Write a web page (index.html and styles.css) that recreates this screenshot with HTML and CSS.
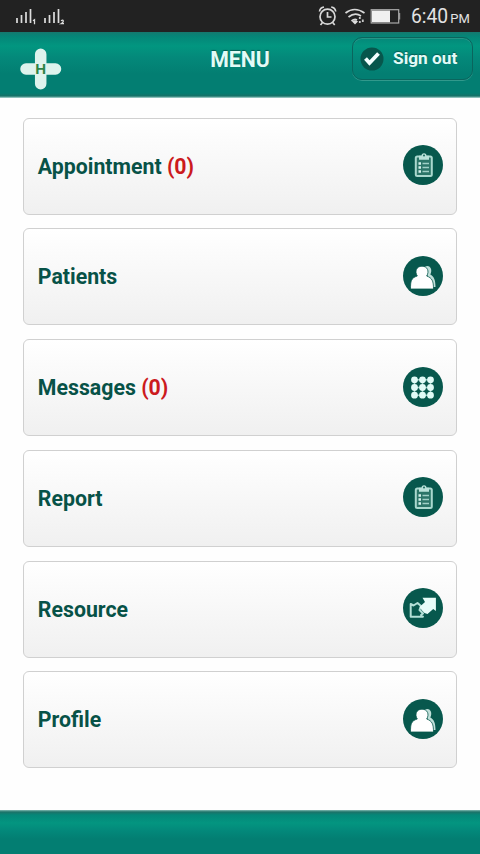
FILE: index.html
```html
<!DOCTYPE html>
<html lang="en">
<head>
<meta charset="utf-8">
<title>Menu</title>
<link rel="stylesheet" href="styles.css">
</head>
<body>
<svg class="defs" aria-hidden="true">
  <symbol id="clipboard" viewBox="0 0 40 40">
    <circle class="disc" cx="20" cy="20" r="20"/>
    <rect x="12.800" y="11.500" width="16" height="19.500" rx="1.500" fill="#2b7568" stroke="#a9d8ce" stroke-width="2"/>
    <path d="M16 14.800v-4h2.500a2.500 2.500 0 0 1 5 0H26v4z" fill="#b9e2d9"/>
    <circle cx="21" cy="10.500" r="1" fill="#17675b"/>
    <path d="M19.500 18.500H26M19.500 22.500H26M19.500 26.500H26" stroke="#9fd0c6" stroke-width="1.500"/>
    <path d="M15.500 18.500h2.500M15.500 22.500h2.500M15.500 26.500h2.500" stroke="#d4f1eb" stroke-width="2.400"/>
  </symbol>
  <symbol id="people" viewBox="0 0 40 40">
    <circle class="disc" cx="20" cy="20" r="20"/>
    <path d="M22 10.500c5-2.500 8 3 5.300 8 3.500 2 5.200 5 5.200 12.500h-5z" fill="#c0e0da"/>
    <path d="M7.500 33c0-8 .5-11 6.800-13-2.800-4.500-1-9.800 4.700-9.800s7.500 5.300 4.700 9.800c5.500 2 6.800 5 6.800 13z" fill="#fff" stroke="#07584d" stroke-width=".8"/>
  </symbol>
  <symbol id="grid" viewBox="0 0 40 40">
    <circle class="disc" cx="20" cy="20" r="20"/>
    <path d="M11.500 12.800h16M11.500 20.500h16M11.500 28.200h16M11.500 12.800v15.400M19.500 12.800v15.400M27.500 12.800v15.400" stroke="#8fc5bb" stroke-width="1.500"/>
    <path d="M11.500 12.800h0M19.500 12.800h0M27.500 12.800h0M11.500 20.500h0M19.500 20.500h0M27.500 20.500h0M11.500 28.200h0M19.500 28.200h0M27.500 28.200h0" stroke="#e0fbf6" stroke-width="6.800" stroke-linecap="round"/>
  </symbol>
  <symbol id="arrows" viewBox="0 0 40 40">
    <circle class="disc" cx="20" cy="20" r="20"/>
    <path d="M7.700 16l2.800 1.500 4-2.500 3.500 3-1.500 4 3.500 3.500-2 1.500 2 1.700H7.700z" fill="#07584d" stroke="#b3e0d7" stroke-width="2" stroke-linejoin="round"/>
    <path d="M19.500 9.800h13.400v13.200l-2.700-2-5.700 5-3-1-2.500-2.500-2.500-3.500 5.500-5z" fill="#e8fdf9"/>
  </symbol>
</svg>

<div class="status">
  <svg class="signals" width="54" height="20" viewBox="0 0 54 20">
    <path d="M2 15v-5M6.500 15V7M11 15V4M15.500 15V1M30 15v-5M34.500 15V7M39 15V4M43.500 15V1" stroke="#ddd" stroke-width="1.700"/>
    <path d="M18 12.800l1.500-1v4.500M46 12.800q2.300-1.500 2.300.5 0 1.200-2.100 2.400h2.800" fill="none" stroke="#ddd" stroke-width="1.300"/>
  </svg>
  <div class="indicators">
    <svg width="84" height="22" viewBox="0 0 84 22">
      <g fill="none" stroke="#d8d8d8" stroke-width="1.700">
        <circle cx="10.500" cy="11.700" r="7.500"/>
        <path d="M10.500 7v5h4M2.500 6.500q.5-4 4.500-4.500M18.700 6.500q-.5-4-4.500-4.500M5.500 17.500l-2 2.500M15.700 17.500l2 2.500"/>
        <path d="M28.500 8q9-7 19 0M31.500 12q6.500-5 12.500-1M34.500 16q3-2.500 5.500-1"/>
      </g>
      <path d="M35 16.500l3 3 3-3q-3-2.500-6 0z" fill="#ddd"/>
      <path d="M42.800 12v2M42.800 16v2M45.800 14.500v2.500" fill="none" stroke="#c8c8c8" stroke-width="1.800"/>
      <rect x="54.200" y="4.700" width="27.500" height="13.300" fill="none" stroke="#aaa" stroke-width="1.200"/>
      <rect x="55" y="5.500" width="18" height="11.700" fill="#f0f0f0"/>
      <rect x="81.700" y="8" width="1.500" height="6.500" fill="#999"/>
    </svg>
    <div class="clock"><span>6:40</span><span class="meridiem">PM</span></div>
  </div>
</div>

<header class="header">
  <svg class="logo" width="42" height="42" viewBox="0 0 42 42">
    <path d="M20.700 6.200v29.500M6 21h29.500" stroke="#def3ed" stroke-width="11.500" stroke-linecap="round"/>
    <text class="logo-letter" x="20.700" y="26" text-anchor="middle">H</text>
  </svg>
  <h1 class="title">MENU</h1>
  <a class="signout">
    <svg width="24" height="24" viewBox="0 0 24 24">
      <circle cx="12" cy="12" r="11.500" fill="#07564c"/>
      <path d="M5.500 11.500l4 4.500L18.500 6.500" fill="none" stroke="#f4ffff" stroke-width="3.800"/>
    </svg>
    <span class="signout-label">Sign out</span>
  </a>
</header>

<main class="menu">
  <a class="card"><span>Appointment <span class="count">(0)</span></span><svg class="icon"><use href="#clipboard"/></svg></a>
  <a class="card"><span>Patients</span><svg class="icon"><use href="#people"/></svg></a>
  <a class="card"><span>Messages <span class="count">(0)</span></span><svg class="icon"><use href="#grid"/></svg></a>
  <a class="card"><span>Report</span><svg class="icon"><use href="#clipboard"/></svg></a>
  <a class="card"><span>Resource</span><svg class="icon"><use href="#arrows"/></svg></a>
  <a class="card"><span>Profile</span><svg class="icon"><use href="#people"/></svg></a>
</main>
<footer class="footer"></footer>
</body>
</html>
```
FILE: styles.css
```css
* { box-sizing: border-box; }
body {
  margin: 0;
  height: 854px;
  overflow: hidden;
  display: flex;
  flex-direction: column;
  background: #fefefe;
  font-family: Roboto, "Liberation Sans", sans-serif;
}
.defs { position: absolute; width: 0; height: 0; }
.disc { fill: #07584d; }
.status {
  height: 32px;
  flex: none;
  display: flex;
  justify-content: space-between;
  background: #222;
  padding: 0 11px 0 15px;
}
.signals { margin-top: 8px; }
.indicators { display: flex; padding-top: 5px; }
.clock {
  width: 58px;
  margin-left: 10px;
  display: flex;
  align-items: baseline;
  gap: 2px;
  font-size: 19.300px;
  line-height: 24px;
  color: #e2e2e2;
  white-space: nowrap;
}
.meridiem { font-size: 13px; }
.header {
  height: 65.500px;
  flex: none;
  display: grid;
  grid-template-columns: 1fr auto 1fr;
  align-items: start;
  padding: 5px 7px 0 20px;
  background: linear-gradient(#16786e 0, #058577 4px, #029680 14px, #04897a 25px, #037e72 42px, #037e72 61px, #167167 64px, #8bc0ba 65.500px);
}
.logo { margin-top: 11px; }
.logo-letter { font: bold 15px "Liberation Sans", sans-serif; fill: #2e8447; }
.title {
  margin: 10px 0 0 -13px;
  font-size: 21.300px;
  line-height: 26px;
  font-weight: 700;
  color: #e2fbf7;
  text-shadow: 0 -1px 1px #045d54;
}
.signout {
  justify-self: end;
  width: 121px;
  height: 43px;
  display: flex;
  align-items: center;
  gap: 9px;
  padding-left: 7px;
  border: 1.500px solid #0a655d;
  border-radius: 10px;
  box-shadow: 0 1px 0 #31998c, inset 0 1px 0 #259587;
  font-size: 17.300px;
  font-weight: 700;
  color: #e2fbf7;
  text-shadow: 0 -1px 1px #045d54;
  white-space: nowrap;
}
.signout-label { padding-bottom: 2px; }
.menu {
  flex: 1;
  display: flex;
  flex-direction: column;
  gap: 13.700px;
  padding: 20.300px 23px 0 22.500px;
}
.card {
  height: 97px;
  flex: none;
  display: flex;
  align-items: center;
  justify-content: space-between;
  padding: 0 13.200px 0 14.300px;
  border: 1.500px solid #d0d0d0;
  border-radius: 6px;
  background: linear-gradient(#fff, #f0f0f0);
  font-size: 21.300px;
  font-weight: 700;
  color: #075247;
}
.count { color: #cc1a1d; }
.icon { width: 40px; height: 40px; margin-top: -2px; }
.footer {
  height: 44.500px;
  flex: none;
  background: linear-gradient(#81b9b1 0, #1d7268 2px, #058778 5px, #039580 13px, #03887a 21px, #037e72 29px, #037e72 100%);
}
```
